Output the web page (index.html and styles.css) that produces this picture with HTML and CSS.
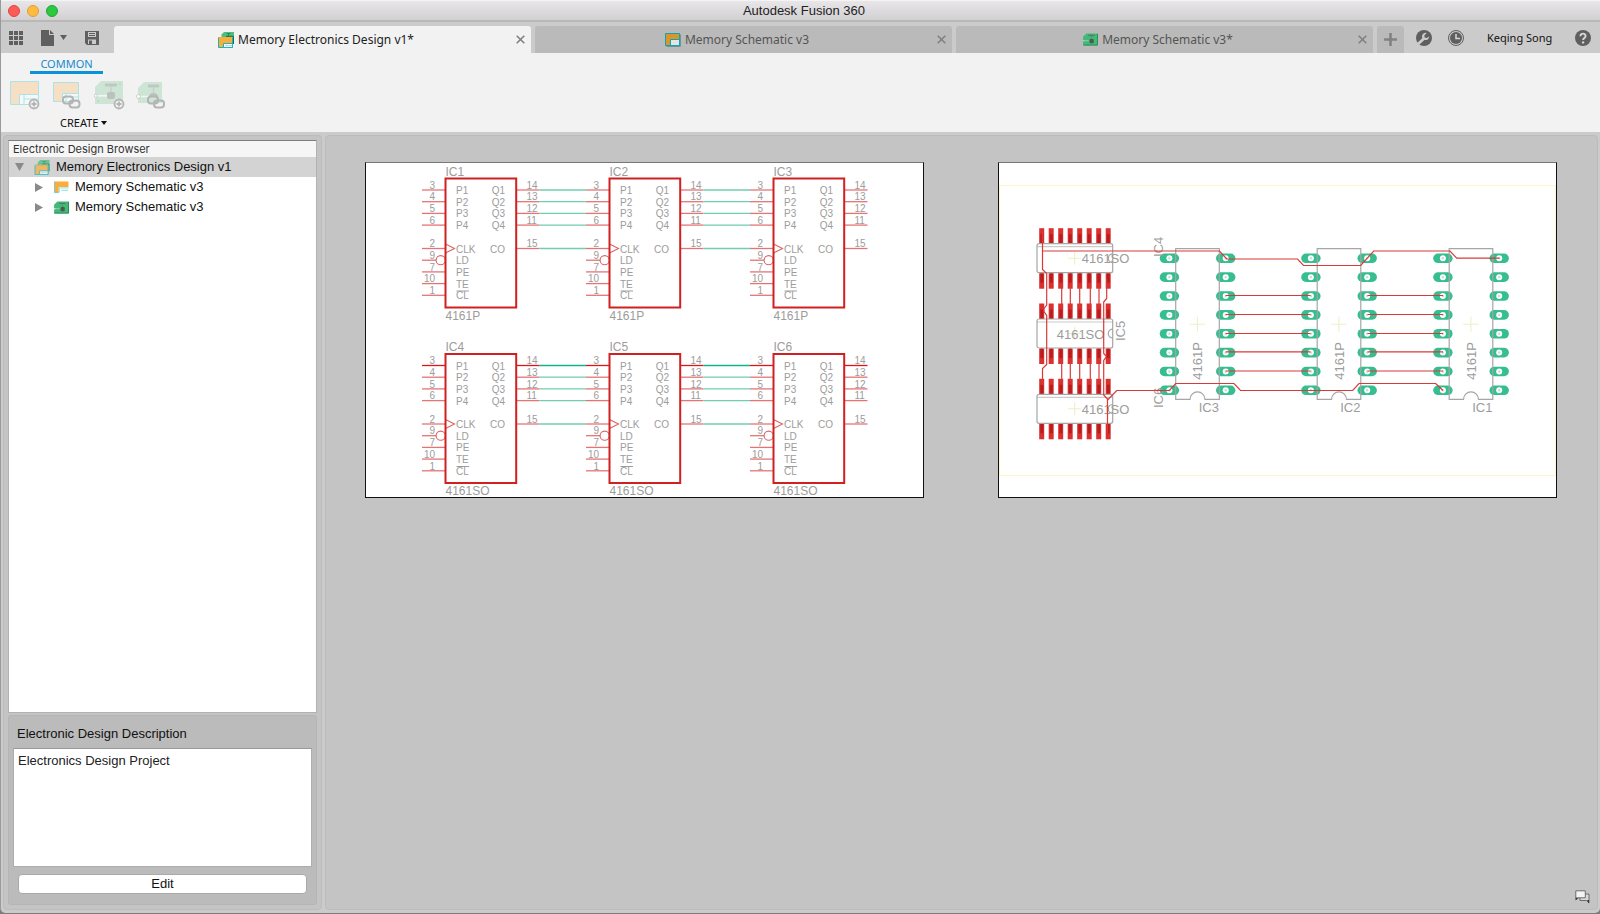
FILE: index.html
```html
<!DOCTYPE html>
<html lang="en">
<head>
<meta charset="utf-8">
<meta name="viewport" content="width=device-width, initial-scale=1">
<title>Autodesk Fusion 360</title>
<link rel="stylesheet" href="styles.css">
</head>
<body>
<svg class="sprite" aria-hidden="true">
  <symbol id="i-design" viewBox="0 0 16 16">
    <path d="M3.500 5V2.500L6 0h10v12H4z" fill="#4abf80"/>
    <path d="M8.500 1.500h4M10.500 1.500v2.500" stroke="#2b8a5a"/>
    <path d="M8 4.300h7.500V12" fill="none" stroke="#1b6b52"/>
    <path d="M.5 5.500h14v10H.5z" fill="#fbad3c" stroke="#17b3bb"/>
    <path d="M5.500 11.500h9v4h-9z" fill="#fff" stroke="#17b3bb"/>
    <path d="M8 11.500v4M8 13.500h6.500" stroke="#8fdce0" stroke-width=".8"/>
    <path d="M.5 5.500h14" stroke="#fbad3c"/>
  </symbol>
  <symbol id="i-schematic" viewBox="0 0 16 14">
    <path d="M1.500 1.500h14v12h-14z" fill="#1c6f78"/>
    <path d="M.5.5h14v12H.5z" fill="#d9962e" stroke="#12a3ad"/>
    <path d="M5.500 6.500h9v6h-9z" fill="#e4e4e4" stroke="#12a3ad"/>
  </symbol>
  <symbol id="i-schematic-light" viewBox="0 0 16 14">
    <path d="M.5.5h15v12H.5z" fill="#fbad3c"/>
    <path d="M.5.5v12h5" fill="none" stroke="#4cc9d0" stroke-width=".8"/>
    <path d="M5 6.500h11V13H5z" fill="#fff"/>
    <path d="M5.500 12.500v-5h10M8 10h7" fill="none" stroke="#7fdbe0" stroke-width="1"/>
  </symbol>
  <symbol id="i-board" viewBox="0 0 16 14">
    <path d="M0 4l3.500-3.500H16V13.500H0V9h1.500V7.500H0z" fill="#45b877"/>
    <path d="M.5 13h15V1" fill="none" stroke="#2a8a57"/>
    <path d="M5.500 2.500h7" stroke="#4c6e5b"/>
    <path d="M9 3v4" stroke="#3c9c66"/>
    <rect x="7" y="6.500" width="4.500" height="4.500" rx="1" fill="#4c5a52"/>
    <path d="M0 8.300h6" stroke="#a5dcbc" stroke-width=".8"/>
  </symbol>
</svg>

<div class="window">
  <header class="titlebar">
    <div class="lights">
      <button class="light light-close" aria-label="Close window"></button>
      <button class="light light-min" aria-label="Minimize window"></button>
      <button class="light light-max" aria-label="Zoom window"></button>
    </div>
    <h1 class="app-title">Autodesk Fusion 360</h1>
  </header>

  <nav class="tabbar">
    <div class="quick">
      <button class="icon-btn" aria-label="Data panel">
        <svg width="14" height="14" viewBox="0 0 14 14"><path fill="#5f5f5f" d="M0 0h4v4H0zM5 0h4v4H5zM10 0h4v4h-4zM0 5h4v4H0zM5 5h4v4H5zM10 5h4v4h-4zM0 10h4v4H0zM5 10h4v4H5zM10 10h4v4h-4z"/></svg>
      </button>
      <button class="icon-btn file-btn" aria-label="File">
        <svg width="26" height="16" viewBox="0 0 26 16"><path fill="#5f5f5f" d="M0 0h8v5h5v11H0zM9 0l4 4H9zM19 5h7l-3.500 5z"/></svg>
      </button>
      <button class="icon-btn" aria-label="Save">
        <svg width="14" height="14" viewBox="0 0 14 14"><path fill="#5f5f5f" fill-rule="evenodd" d="M0 0h14v14H2l-2-2zM3 1v5h8V1zM3 8.500V13h8V8.500z"/><path fill="#5f5f5f" d="M4 2h6v1H4zM4 4h6v1H4zM4 9.500h3V13H4z"/></svg>
      </button>
    </div>

    <div class="tabs">
      <div class="tab tab-active">
        <a class="tab-link" href="#design"><svg width="16" height="16"><use href="#i-design"/></svg>Memory Electronics Design v1*</a>
        <button class="tab-close" aria-label="Close tab"><svg width="9" height="9" viewBox="0 0 9 9"><path d="M.7.7l7.600 7.600M8.300.7L.7 8.300"/></svg></button>
      </div>
      <div class="tab">
        <a class="tab-link" href="#schematic"><svg width="16" height="14"><use href="#i-schematic"/></svg>Memory Schematic v3</a>
        <button class="tab-close" aria-label="Close tab"><svg width="9" height="9" viewBox="0 0 9 9"><path d="M.7.7l7.600 7.600M8.300.7L.7 8.300"/></svg></button>
      </div>
      <div class="tab">
        <a class="tab-link" href="#board"><svg width="15" height="13"><use href="#i-board"/></svg>Memory Schematic v3*</a>
        <button class="tab-close" aria-label="Close tab"><svg width="9" height="9" viewBox="0 0 9 9"><path d="M.7.7l7.600 7.600M8.300.7L.7 8.300"/></svg></button>
      </div>
      <button class="tab-add" aria-label="New tab"><svg width="13" height="13" viewBox="0 0 13 13"><path d="M6.500 0v13M0 6.500h13" stroke="#828282" stroke-width="2.600"/></svg></button>
    </div>

    <div class="account">
      <button class="icon-btn" aria-label="Extensions">
        <svg width="16" height="16" viewBox="0 0 16 16"><circle cx="8" cy="8" r="8" fill="#5f5f5f"/><path d="M1.500 14.500L8 8.500" stroke="#cbcbcb" stroke-width="2.800"/><path d="M10.800 3A3.600 3.600 0 1 0 13.200 6.500L10.800 8 8.600 7.400 8.400 5.200z" fill="#cbcbcb"/></svg>
      </button>
      <button class="icon-btn" aria-label="Job status">
        <svg width="16" height="16" viewBox="0 0 16 16"><circle cx="8" cy="8" r="7.500" fill="none" stroke="#5f5f5f"/><circle cx="8" cy="8" r="6" fill="#5f5f5f"/><path d="M8 4v4.500h4" fill="none" stroke="#d6d6d6" stroke-width="1.500"/></svg>
      </button>
      <button class="user">Keqing Song</button>
      <button class="icon-btn help" aria-label="Help">
        <svg width="16" height="16" viewBox="0 0 16 16"><circle cx="8" cy="8" r="8" fill="#5f5f5f"/><path d="M5.400 6.200C5.400 2.800 10.600 2.900 10.600 6c0 2-2.500 2-2.500 4" fill="none" stroke="#d6d6d6" stroke-width="1.900"/><circle cx="8.100" cy="12.400" r="1.200" fill="#d6d6d6"/></svg>
      </button>
    </div>
  </nav>

  <section class="ribbon">
    <a class="ribbon-tab" href="#common">COMMON</a>
    <div class="tools">
      <button class="tool" aria-label="New schematic">
        <svg width="31" height="29" viewBox="0 0 31 29"><path d="M.5.5h28v23H.5z" fill="#f5dfc5" stroke="#aee3e6"/><path d="M9.500 13.500h19v10h-19z" fill="#f4f8f8" stroke="#aee3e6"/><path d="M14 14v9.500M14 18h14" stroke="#aee3e6"/><circle cx="24" cy="23" r="4.500" fill="#f2f2f2" stroke="#b4b4b4" stroke-width="1.800"/><path d="M24 20.500v5M21.500 23h5" stroke="#b4b4b4" stroke-width="1.800"/></svg>
      </button>
      <button class="tool" aria-label="Link schematic">
        <svg width="31" height="29" viewBox="0 0 31 29"><path d="M1.500 1.500h25v19h-25z" fill="#f5dfc5" stroke="#aee3e6"/><path d="M10.500 12.500h16v8h-16z" fill="#f4f8f8" stroke="#aee3e6"/><path d="M14 13v7M14 16h12" stroke="#aee3e6"/><g fill="none" stroke="#b4b4b4" stroke-width="2"><rect x="11" y="15.500" width="10" height="7" rx="3"/><rect x="17.500" y="19.500" width="10" height="7" rx="3"/></g></svg>
      </button>
      <button class="tool" aria-label="New board">
        <svg width="31" height="29" viewBox="0 0 31 29"><path d="M1 6l6-6h22v23H1z" fill="#cde5d5"/><path d="M11 4h12" stroke="#c2c6c3" stroke-width="2.800"/><path d="M17 5v7" stroke="#c2cfc6" stroke-width="1.200"/><rect x="13" y="11" width="8" height="7" rx="2" fill="#bdc0be"/><path d="M2 14.800h11" stroke="#f4f4f4" stroke-width="1.800"/><circle cx="1.800" cy="14.800" r="1.600" fill="#fff" stroke="#c3c3c3" stroke-width=".8"/><circle cx="4" cy="20" r="1" fill="#b3d8c0"/><circle cx="26" cy="3" r="1" fill="#b3d8c0"/><circle cx="25" cy="23" r="4.500" fill="#f2f2f2" stroke="#b4b4b4" stroke-width="1.800"/><path d="M25 20.500v5M22.500 23h5" stroke="#b4b4b4" stroke-width="1.800"/></svg>
      </button>
      <button class="tool" aria-label="Link board">
        <svg width="31" height="29" viewBox="0 0 31 29"><path d="M2 7l6-6h18v21H2z" fill="#cde5d5"/><path d="M12 5h11" stroke="#c2c6c3" stroke-width="2.800"/><path d="M17.500 6v6" stroke="#c2cfc6" stroke-width="1.200"/><path d="M13 16q0-4 4.500-4t4.500 4z" fill="#bdc0be"/><path d="M4 15.500h9" stroke="#f4f4f4" stroke-width="1.500"/><circle cx="2.500" cy="15.500" r="2" fill="#fff" stroke="#c3c3c3" stroke-width=".8"/><g fill="none" stroke="#b4b4b4" stroke-width="2"><rect x="12" y="15.500" width="10" height="7" rx="3"/><rect x="18" y="19.500" width="10" height="7" rx="3"/></g></svg>
      </button>
    </div>
    <button class="create">CREATE<svg width="6" height="4" viewBox="0 0 6 4"><path d="M0 0h6L3 4z" fill="#111"/></svg></button>
  </section>

  <div class="workspace">
    <aside class="sidebar">
      <section class="browser">
        <h2 class="browser-title">Electronic Design Browser</h2>
        <ul class="tree">
          <li class="row row-selected">
            <button class="twist" aria-label="Collapse"><svg width="9" height="8" viewBox="0 0 9 8"><path d="M0 0h9L4.500 8z" fill="#8a8a8a"/></svg></button>
            <svg class="row-icon faded" width="16" height="15"><use href="#i-design"/></svg>Memory Electronics Design v1
          </li>
          <li class="row row-child">
            <button class="twist" aria-label="Expand"><svg width="8" height="9" viewBox="0 0 8 9"><path d="M0 0v9l8-4.500z" fill="#8a8a8a"/></svg></button>
            <svg class="row-icon" width="15" height="13"><use href="#i-schematic-light"/></svg>Memory Schematic v3
          </li>
          <li class="row row-child">
            <button class="twist" aria-label="Expand"><svg width="8" height="9" viewBox="0 0 8 9"><path d="M0 0v9l8-4.500z" fill="#8a8a8a"/></svg></button>
            <svg class="row-icon" width="15" height="13"><use href="#i-board"/></svg>Memory Schematic v3
          </li>
        </ul>
      </section>
      <section class="description">
        <label class="description-label" for="desc">Electronic Design Description</label>
        <textarea class="description-text" id="desc" readonly>Electronics Design Project</textarea>
        <button class="edit">Edit</button>
      </section>
    </aside>

    <main class="canvas">
      <div class="previews">
        <svg class="preview" id="schematic" viewBox="0 0 557 334" role="img" aria-label="Schematic preview"></svg>
        <svg class="preview" id="board" viewBox="0 0 557 334" role="img" aria-label="Board preview"></svg>
      </div>
      <button class="chat" aria-label="Comments">
        <svg width="15" height="14" viewBox="0 0 15 14"><path d="M5 4h9v9l-2.500-2.500H5z" fill="#d8d8d8" stroke="#6c6c6c"/><path d="M12 10l2 3.500V10z" fill="#333"/><path d="M.8.8h9.500v7H3L.8 9.800z" fill="#f4f4f4" stroke="#6c6c6c"/><path d="M.8 7.500v2.800l2.500-2.500z" fill="#333"/></svg>
      </button>
    </main>
  </div>
</div>
<script src="drawings.js"></script>
</body>
</html>
```

FILE: styles.css
```css
* { box-sizing: border-box; }

body {
  margin: 0;
  background: #7c7c7c;
  color: #111;
  font: 13px/20px "Liberation Sans", Arial, sans-serif;
}

button {
  margin: 0;
  padding: 0;
  border: 0;
  background: none;
  color: inherit;
  font: inherit;
}

a { color: inherit; text-decoration: none; }

h1, h2 { margin: 0; font-weight: 400; }

svg { display: block; flex: none; }

.sprite { position: absolute; width: 0; height: 0; }

.window {
  display: flex;
  flex-direction: column;
  min-height: calc(100vh - 1px);
  border-left: 1px solid #9a9a9a;
  border-radius: 0 0 5px 5px;
  background: #cbcbcb;
}

/* Title bar */
.titlebar {
  display: grid;
  grid-template-columns: 1fr auto 1fr;
  align-items: center;
  height: 22px;
  padding-left: 7px;
  border-top: 1px solid #f5f4f5;
  border-bottom: 2px solid #b9b8b9;
  background: linear-gradient(#e8e6e9, #d2d0d3);
}

.lights { display: flex; gap: 7px; }

.light { width: 12px; height: 12px; border-radius: 50%; }
.light-close { border: 1px solid #e2463f; background: #fc5b57; }
.light-min { border: 1px solid #dfa033; background: #fdbc40; }
.light-max { border: 1px solid #1fa734; background: #2bc840; }

.app-title { font-size: 13px; line-height: 19px; color: #222; }

/* Document tabs */
.tabbar {
  display: flex;
  height: 31px;
  background: #cbcbcb;
  font-family: "Noto Sans", "Open Sans", sans-serif;
}

.icon-btn { display: flex; align-items: center; }

.quick {
  display: flex;
  align-items: center;
  gap: 18px;
  width: 113px;
  padding-left: 8px;
}

.tabs { display: flex; flex: 1; gap: 4px; padding-top: 4px; }

.tab {
  display: flex;
  flex: 1;
  padding: 0 3px 0 5px;
  border-radius: 3px 3px 0 0;
  background: #bababa;
  color: #555;
}

.tab-active { background: #f2f2f2; color: #222; }

.tab-link {
  display: flex;
  flex: 1;
  align-items: center;
  justify-content: center;
  gap: 4px;
  font-size: 12px;
}

.tab-close {
  display: flex;
  align-items: center;
  justify-content: center;
  width: 15px;
}

.tab-close path { fill: none; stroke: #808080; stroke-width: 1.6; }

.tab-add {
  display: flex;
  align-items: center;
  justify-content: center;
  width: 27px;
  border-radius: 3px 3px 0 0;
  background: #bababa;
}

.account {
  display: flex;
  align-items: center;
  gap: 16px;
  width: 196px;
  padding: 0 9px 0 12px;
}

.user { margin-left: 7px; font-size: 11px; color: #111; }

.help { margin-left: auto; }

/* Ribbon */
.ribbon {
  display: flex;
  flex-direction: column;
  align-items: flex-start;
  height: 79px;
  background: #f2f2f2;
  font-family: "Noto Sans", "Open Sans", sans-serif;
}

.ribbon-tab {
  width: 73px;
  height: 21px;
  margin-left: 29px;
  border-bottom: 3px solid #0b93d8;
  color: #1489d0;
  font-size: 11px;
  line-height: 22px;
  text-align: center;
}

.tools { display: flex; gap: 11px; padding: 7px 0 0 9px; }

.create {
  display: flex;
  align-items: center;
  gap: 3px;
  margin: 5px 0 0 59px;
  font-size: 11px;
  line-height: 16px;
}

/* Workspace */
.workspace {
  display: flex;
  flex: 1;
  gap: 3px;
  padding: 3px 2px;
}

.sidebar,
.canvas {
  border: 1px solid #bcbcbc;
  border-radius: 4px;
  background: #c4c4c4;
}

.sidebar {
  display: flex;
  flex-direction: column;
  gap: 2px;
  width: 319px;
  padding: 4px;
}

.browser {
  flex: 1;
  border: 1px solid #b2b2b2;
  border-top-color: #7e7e7e;
  background: #fff;
}

.browser-title {
  height: 16px;
  padding-left: 4px;
  background: #f6f6f6;
  color: #333;
  font-family: Inter, "Liberation Sans", sans-serif;
  font-size: 11px;
  line-height: 17px;
}

.tree { margin: 0; padding: 0; list-style: none; }

.row { display: flex; align-items: center; height: 20px; padding-left: 6px; }
.row-selected { background: #d3d3d3; }
.row-child { padding-left: 26px; }

.twist { display: flex; width: 9px; }
.row-icon { margin: 0 6px 0 10px; }
.faded { opacity: .75; }

.description {
  display: flex;
  flex-direction: column;
  height: 190px;
  padding: 8px 4px 10px;
  border: 1px solid #b5b5b5;
  border-radius: 3px;
  background: #bbb;
}

.description-label { padding: 0 4px 4px; }

.description-text {
  flex: 1;
  min-height: 0;
  margin: 0;
  padding: 2px 4px;
  border: 1px solid #adadad;
  border-top-color: #999;
  outline: 0;
  background: #fff;
  color: #222;
  font: inherit;
  resize: none;
}

.edit {
  height: 20px;
  margin: 7px 5px 0;
  border: 1px solid #a9a9a9;
  border-radius: 4px;
  background: #fff;
  line-height: 18px;
}

.canvas {
  display: flex;
  flex: 1;
  flex-direction: column;
  justify-content: space-between;
  min-width: 0;
  padding: 26px 7px 5px 39px;
}

.previews {
  display: grid;
  grid-template-columns: 1fr 1fr;
  gap: 74px;
  padding-right: 33px;
}

.preview {
  width: 100%;
  border: 1px solid #111;
  border-top-color: #777;
  background: #fff;
}

.chat { align-self: flex-end; }

/* Drawings */
.preview text {
  fill: #9c9c9c;
  font-family: "Liberation Sans", Arial, sans-serif;
}

.pin-text { font-size: 10px; }
.part-text { font-size: 12px; }
.board-text { font-size: 13px; }
.end { text-anchor: end; }

.outline { fill: none; stroke: #d02020; stroke-width: 2; }
.pin { fill: none; stroke: #e47474; stroke-width: 1.3; }
.symbol { fill: none; stroke: #e06060; stroke-width: 1.1; }
.net { stroke: #70cdb0; stroke-width: 1.3; }
.pin.strong { stroke: #dc1616; }
.net.strong { stroke: #12b28a; }
.bar { stroke: #9c9c9c; stroke-width: 1; }

.edge { fill: none; stroke: #fdf6d2; stroke-width: 1.2; }
.cross { stroke: #ededc4; stroke-width: 1; }
.package { fill: none; stroke: #a6a6a6; stroke-width: 1.2; }
.smd { fill: #d93030; }
.smd-core { fill: #b91c1c; }
.pad { fill: #36bd90; }
.hole { fill: #fff; }
.hole-mark { fill: #c9ddd5; }
.trace { fill: none; stroke: #d83a3a; stroke-width: 1.2; }
```

FILE: drawings.js
```js
const NS = "http://www.w3.org/2000/svg";

function add(parent, tag, attrs, text) {
  const el = document.createElementNS(NS, tag);
  for (const key in attrs) el.setAttribute(key, attrs[key]);
  if (text) el.textContent = text;
  parent.appendChild(el);
  return el;
}

const PITCH = 11.7;
const LEFT_PINS = [
  [0, "3", "P1"], [1, "4", "P2"], [2, "5", "P3"], [3, "6", "P4"], [5, "2", "CLK"],
  [6, "9", "LD"], [7, "7", "PE"], [8, "10", "TE"], [9, "1", "CL"]
];
const RIGHT_PINS = [[0, "14", "Q1"], [1, "13", "Q2"], [2, "12", "Q3"], [3, "11", "Q4"], [5, "15", "CO"]];

function drawSchematic(svg) {
  for (let i = 0; i < 6; i++) {
    const col = i % 3;
    const row = Math.floor(i / 3);
    const g = add(svg, "g", { transform: `translate(${79.5 + col * 164} ${15.5 + row * 175.5})` });
    add(g, "text", { class: "part-text", x: 0, y: -3 }, "IC" + (i + 1));
    add(g, "text", { class: "part-text", x: 0, y: 141 }, row ? "4161SO" : "4161P");
    for (const [slot, num, name] of LEFT_PINS) {
      const y = 11.5 + slot * PITCH;
      const tone = row && slot === 0 ? " strong" : "";
      add(g, "path", { class: "pin" + tone, d: `M-23.500 ${y}H${name === "LD" ? -9.5 : 0}` });
      add(g, "text", { class: "pin-text end", x: -10.5, y: y - 1.3 }, num);
      add(g, "text", { class: "pin-text", x: 10.5, y: y + 4 }, name);
      if (name === "CLK") add(g, "path", { class: "symbol", d: `M0 ${y - 4.5}L9 ${y}L0 ${y + 4.5}` });
      if (name === "LD") add(g, "circle", { class: "symbol", cx: -4.8, cy: y, r: 4.6 });
      if (name === "CL") add(g, "path", { class: "bar", d: `M11 ${y - 4.3}h12.500` });
    }
    for (const [slot, num, name] of RIGHT_PINS) {
      const y = 11.5 + slot * PITCH;
      const tone = row && slot === 0 ? " strong" : "";
      add(g, "path", { class: "pin" + tone, d: `M71 ${y}h23` });
      if (col < 2) add(g, "path", { class: "net" + tone, d: `M94 ${y}h46.500` });
      add(g, "text", { class: "pin-text", x: 81, y: y - 1.3 }, num);
      add(g, "text", { class: "pin-text end", x: 59.5, y: y + 4 }, name);
    }
    add(g, "rect", { class: "outline", x: 0, y: 0, width: 70.7, height: 129 });
  }
}

function cross(g, x, y, arm) {
  add(g, "path", { class: "cross", d: `M${x - arm} ${y}h${2 * arm}M${x} ${y - arm}v${2 * arm}` });
}

function drawBoard(svg) {
  add(svg, "rect", { class: "edge", x: 0.5, y: 22.5, width: 556, height: 290 });

  for (let i = 0; i < 3; i++) {
    const g = add(svg, "g", { transform: `translate(38 ${80.7 + i * 75.3})` });
    for (let p = 0; p < 8; p++) {
      const x = 2.2 + p * 9.5;
      for (const y of [-15.5, 29.5]) {
        add(g, "rect", { class: "smd", x, y, width: 5, height: 15.5 });
        add(g, "rect", { class: "smd-core", x: x + 1.2, y: y < 0 ? y + 6 : y, width: 2.8, height: 9.5 });
      }
    }
    cross(g, 37.7, 14.5, 6.5);
    add(g, "rect", { class: "package", x: 0, y: 0, width: 75.7, height: 29, rx: 2 });
    add(g, "path", { class: "package", d: "M0 3h75.700", opacity: 0.6 });
    add(g, "path", { class: "package", d: "M75.700 10.200a4.400 4.400 0 0 0 0 8.800" });
    add(g, "text", { class: "board-text", x: i === 1 ? 19.7 : 44.7, y: 19.5 }, "4161SO");
  }

  [["IC3", 0], ["IC2", 141.5], ["IC1", 273.5]].forEach(([name, dx]) => {
    const g = add(svg, "g", { transform: `translate(${176.7 + dx} 85.700)` });
    for (let p = 0; p < 8; p++) {
      const y = 9.6 + p * 18.86;
      for (const x of [-6.3, 50]) {
        add(g, "rect", { class: "pad", x: x - 9.7, y: y - 4.8, width: 19.4, height: 9.6, rx: 4.8 });
        add(g, "circle", { class: "hole", cx: x, cy: y, r: 3 });
        add(g, "circle", { class: "hole-mark", cx: x, cy: y, r: 1.2 });
      }
    }
    cross(g, 21.7, 75.5, 7.5);
    add(g, "path", { class: "package", d: "M0 0h43.600v150.700h-14.300a7.500 7.500 0 0 0-15 0H0z" });
    add(g, "text", { class: "board-text", transform: "translate(26.500 131) rotate(-90)" }, "4161P");
    add(g, "text", { class: "board-text", x: 23, y: 163.5 }, name);
  });

  [["IC4", 163.5, 94], ["IC5", 126, 178], ["IC6", 163.5, 245]].forEach(([name, x, y]) => {
    add(svg, "text", { class: "board-text", transform: `translate(${x} ${y}) rotate(-90)` }, name);
  });

  const traces = [
    "M43.500 70V106.500L47.700 110.500V142L45 145.500V148.500L47.700 152.500V201.500L43.500 205.500V222",
    "M43.500 88H220.500L227.700 96H298.500L304.500 102.500H361.700L374.700 88H451L457.700 95.200H500.500",
    "M107.700 116V135.500L104.700 139V190.500L107.500 193.500L104.700 197.500V232L108.500 236V270",
    "M108.500 237L117.700 227.500H170.500L176.700 220.500H235L241.500 227.500H353.700L360 220.500H436.700L444 227.500"
  ];
  for (const y of [126, 201]) {
    for (const x of [62.7, 71.3, 80.7, 91.3, 100]) traces.push(`M${x} ${y - 3}v20`);
  }
  for (const y of [132.5, 151.5, 170.5, 188.8, 208]) {
    traces.push(`M226.700 ${y}H311.500`, `M368.500 ${y}H444`);
  }
  for (const d of traces) add(svg, "path", { class: "trace", d });
}

drawSchematic(document.getElementById("schematic"));
drawBoard(document.getElementById("board"));
```
